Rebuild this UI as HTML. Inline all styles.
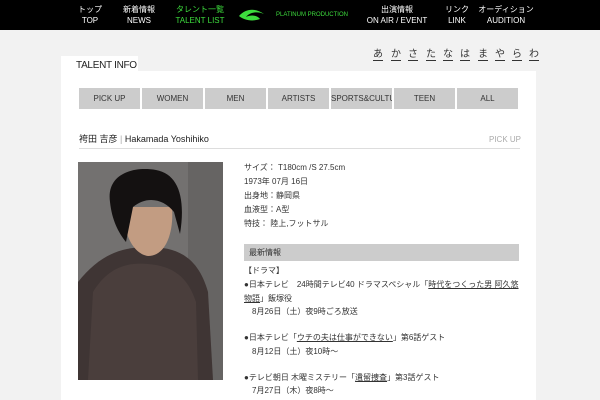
<!DOCTYPE html>
<html><head><meta charset="utf-8"><style>
*{margin:0;padding:0;box-sizing:border-box}
body{width:600px;height:400px;overflow:hidden;background:#f2f2f2;font-family:"Liberation Sans","Noto Sans CJK JP",sans-serif;position:relative;color:#333}
.hdr{position:absolute;left:0;top:0;width:600px;height:30px;background:#000}
.nav{position:absolute;top:4px;color:#fff;font-size:8px;line-height:11px;text-align:center;transform:translateX(-50%);white-space:nowrap}
.nav.g{color:#3ddc3d}
.a{position:absolute;top:49px;font-size:10px;color:#333;border-bottom:1px solid #333;line-height:11px}
.tab{position:absolute;left:61px;top:56px;width:77px;height:16px;background:#fff;font-size:10px;padding:4px 0 0 15px;color:#222;white-space:nowrap;letter-spacing:-0.3px}
.panel{position:absolute;left:61px;top:71px;width:475px;height:329px;background:#fff}
.btn{position:absolute;top:88px;width:61px;height:21px;background:#ccc;font-size:8px;text-align:center;line-height:21px;color:#333;white-space:nowrap;overflow:hidden}
.t{position:absolute;font-size:8px;line-height:10px;white-space:nowrap;color:#333}
u{text-decoration:underline}
</style></head><body>
<div class="hdr"></div>
<div class="nav" style="left:90px">トップ<br>TOP</div>
<div class="nav" style="left:139px">新着情報<br>NEWS</div>
<div class="nav g" style="left:200px">タレント一覧<br>TALENT LIST</div>
<svg style="position:absolute;left:238px;top:8px" width="30" height="14" viewBox="0 0 30 14"><path d="M1 8 C8 0 18 0 26 6 C20 3 12 4 8 9 C14 6 20 8 22 11 C14 14 6 12 1 8Z" fill="#3ddc3d"/></svg>
<div class="nav g" style="left:312px;top:10px;font-size:6px;color:#3ddc3d">PLATINUM PRODUCTION</div>
<div class="nav" style="left:397px">出演情報<br>ON AIR / EVENT</div>
<div class="nav" style="left:457px">リンク<br>LINK</div>
<div class="nav" style="left:506px">オーディション<br>AUDITION</div>
<div class="a" style="left:373px">あ</div><div class="a" style="left:391px">か</div><div class="a" style="left:408px">さ</div><div class="a" style="left:426px">た</div><div class="a" style="left:443px">な</div><div class="a" style="left:460px">は</div><div class="a" style="left:478px">ま</div><div class="a" style="left:495px">や</div><div class="a" style="left:512px">ら</div><div class="a" style="left:529px">わ</div>
<div class="panel"></div>
<div class="tab">TALENT INFO</div>
<div class="btn" style="left:79px">PICK UP</div>
<div class="btn" style="left:142px">WOMEN</div>
<div class="btn" style="left:205px">MEN</div>
<div class="btn" style="left:268px">ARTISTS</div>
<div class="btn" style="left:331px">SPORTS&amp;CULTURE</div>
<div class="btn" style="left:394px">TEEN</div>
<div class="btn" style="left:457px">ALL</div>
<div class="t" style="left:79px;top:134px;font-size:9px;color:#222">袴田 吉彦 <span style="color:#aaa">|</span> Hakamada Yoshihiko</div>
<div class="t" style="left:489px;top:135px;color:#aaa">PICK UP</div>
<div style="position:absolute;left:79px;top:148px;width:441px;height:1px;background:#ddd"></div>
<svg style="position:absolute;left:78px;top:162px" width="145" height="218" viewBox="0 0 145 218">
<rect width="145" height="218" fill="#737170"/>
<rect x="110" width="35" height="218" fill="#666463"/>
<path d="M0 120 C20 95 40 85 70 85 C100 85 120 95 130 130 L135 218 L0 218Z" fill="#3f3534"/>
<path d="M15 130 C30 105 50 100 70 102 C95 104 110 115 118 140 L120 218 L10 218Z" fill="#4a3e3c"/>
<path d="M46 45 C44 70 55 92 70 94 C88 94 96 70 94 45Z" fill="#c29c82"/>
<path d="M32 40 C28 12 55 4 78 8 C100 12 108 35 102 72 L96 50 C85 36 68 34 55 45 L48 80 C40 70 34 58 32 40Z" fill="#141111"/>
</svg>
<div class="t" style="left:244px;top:163px">サイズ： T180cm /S 27.5cm</div>
<div class="t" style="left:244px;top:177px">1973年 07月 16日</div>
<div class="t" style="left:244px;top:191px">出身地：静岡県</div>
<div class="t" style="left:244px;top:205px">血液型：A型</div>
<div class="t" style="left:244px;top:219px">特技： 陸上,フットサル</div>
<div style="position:absolute;left:244px;top:244px;width:275px;height:17px;background:#ccc"></div>
<div class="t" style="left:249px;top:248px">最新情報</div>
<div class="t" style="left:244px;top:266px">【ドラマ】</div>
<div class="t" style="left:244px;top:280px">●日本テレビ　24時間テレビ40 ドラマスペシャル「<u>時代をつくった男 阿久悠</u></div>
<div class="t" style="left:244px;top:294px"><u>物語</u>」飯塚役</div>
<div class="t" style="left:252px;top:307px">8月26日（土）夜9時ごろ放送</div>
<div class="t" style="left:244px;top:333px">●日本テレビ「<u>ウチの夫は仕事ができない</u>」第6話ゲスト</div>
<div class="t" style="left:252px;top:347px">8月12日（土）夜10時〜</div>
<div class="t" style="left:244px;top:373px">●テレビ朝日 木曜ミステリー「<u>遺留捜査</u>」第3話ゲスト</div>
<div class="t" style="left:252px;top:386px">7月27日（木）夜8時〜</div>
</body></html>
